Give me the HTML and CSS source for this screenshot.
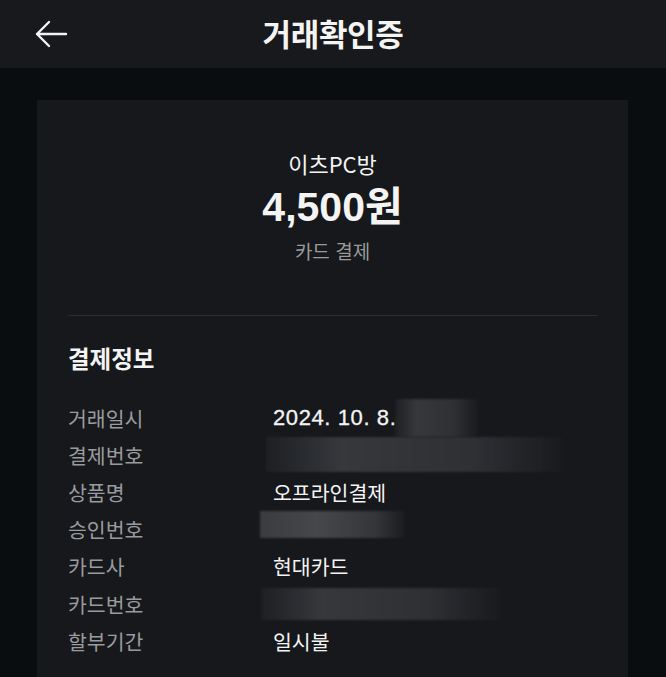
FILE: index.html
```html
<!DOCTYPE html>
<html lang="ko">
<head>
<meta charset="utf-8">
<link rel="stylesheet" href="styles.css">
</head>
<body>
<header class="topbar">
  <svg class="back" width="34" height="30" viewBox="0 0 34 30"><path d="M32 15H3M15 3L3 15L15 27" fill="none" stroke="#f2f2f2" stroke-width="2.4" stroke-linecap="round" stroke-linejoin="round"/></svg>
  <h1 class="title">거래확인증</h1>
</header>
<main class="page">
  <section class="card">
    <div class="summary">
      <div class="store">이츠PC방</div>
      <div class="amount">4,500원</div>
      <div class="method">카드 결제</div>
    </div>
    <hr class="divider">
    <h2 class="section">결제정보</h2>
    <dl class="rows">
      <div class="row"><dt>거래일시</dt><dd><span class="num">2024. 10. 8.</span><span class="blur b-time"></span></dd></div>
      <div class="row"><dt>결제번호</dt><dd><span class="blur b-pay"></span></dd></div>
      <div class="row"><dt>상품명</dt><dd>오프라인결제</dd></div>
      <div class="row"><dt>승인번호</dt><dd><span class="blur b-appr"></span></dd></div>
      <div class="row"><dt>카드사</dt><dd>현대카드</dd></div>
      <div class="row"><dt>카드번호</dt><dd><span class="blur b-card"></span></dd></div>
      <div class="row"><dt>할부기간</dt><dd>일시불</dd></div>
    </dl>
  </section>
</main>
</body>
</html>
```
FILE: styles.css
```css
* { box-sizing: border-box; }
html, body { margin: 0; padding: 0; }
body {
  background: #0a0d10;
  font-family: "Noto Sans CJK KR", "Noto Sans", sans-serif;
  color: #f4f4f4;
  width: 666px;
  height: 677px;
  overflow: hidden;
}
.topbar {
  height: 68px;
  background: #17191c;
  display: flex;
  align-items: center;
  justify-content: center;
  position: relative;
}
.back { position: absolute; left: 34px; top: 19px; }
.title {
  margin: 0;
  font-size: 31px;
  font-weight: 700;
  letter-spacing: -0.3px;
  line-height: 1;
  margin-top: -4px;
}
.page { padding: 32px 38px 0 37px; height: 609px; }
.card {
  background: #16181b;
  height: 577px;
  padding: 48px 31px 0 31px;
  overflow: hidden;
}
.summary { display: flex; flex-direction: column; align-items: center; }
.store { font-size: 22px; line-height: 30px; }
.amount {
  font-size: 41px; font-weight: 700; line-height: 46px; margin-top: 6px;
  font-family: "Liberation Sans", "Noto Sans CJK KR", sans-serif;
}
.method { font-size: 19px; line-height: 26px; color: #9a9b9e; margin-top: 8px; }
.divider { border: 0; border-top: 1px solid #2b2d31; margin: 51px 0 0 0; }
.section { margin: 26px 0 0 0; font-size: 23.5px; font-weight: 700; line-height: 32px; }
.rows { margin: 25px 0 0 0; display: flex; flex-direction: column; }
.row { display: flex; height: 37.2px; align-items: center; flex: none; }
.row dt { width: 205px; color: #9a9b9e; font-size: 20.5px; }
.row dd {
  margin: 0; font-size: 20.5px; color: #f4f4f4; display: flex; align-items: center;
}
.num {
  font-family: "Liberation Sans", sans-serif;
  font-size: 22px;
  letter-spacing: 0.6px;
  -webkit-text-stroke: 0.3px #f4f4f4;
}
.blur {
  display: inline-block;
  background: linear-gradient(90deg, rgba(42,44,48,0.4), #36383c 25%, #2e3034 70%, rgba(30,32,35,0.3));
  filter: blur(1px);
}
.b-time { width: 84px; height: 38px; margin-left: -1px; }
.b-pay { width: 298px; height: 35px; margin-left: -7px; }
.b-appr { width: 144px; height: 27px; margin-left: -13px; margin-top: -10px; background: linear-gradient(90deg, #3a3c40, #45474b 40%, #34363a 80%, rgba(40,42,45,0.3)); }
.b-card { width: 240px; height: 32px; margin-left: -12px; }
```
